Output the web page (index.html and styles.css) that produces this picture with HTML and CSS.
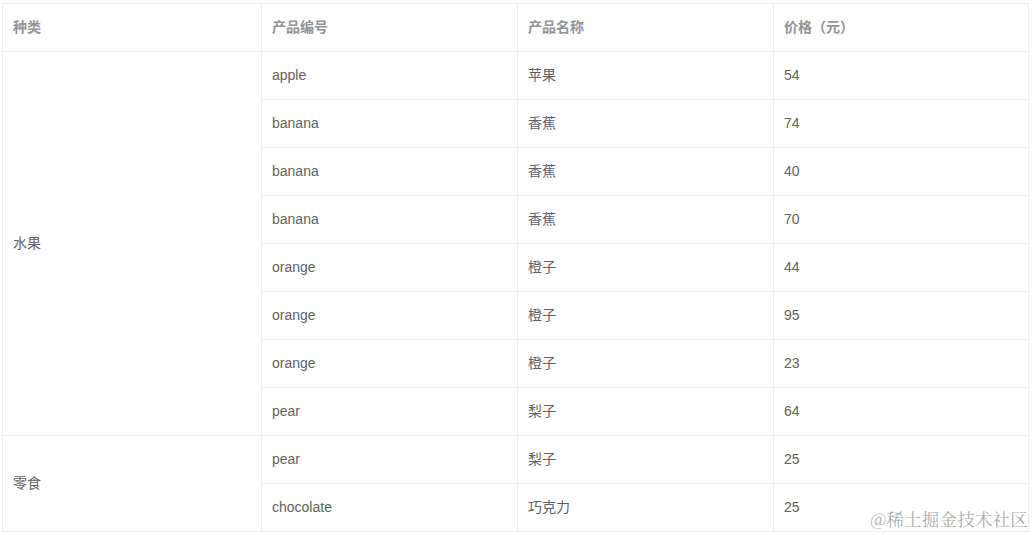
FILE: index.html
```html
<!DOCTYPE html>
<html lang="zh-CN">
<head>
<meta charset="utf-8">
<title>表格</title>
<link rel="stylesheet" href="styles.css">
</head>
<body>
<div class="table">
  <div class="th">种类</div>
  <div class="th">产品编号</div>
  <div class="th">产品名称</div>
  <div class="th">价格（元）</div>

  <div class="td span8">水果</div>
  <div class="td">apple</div><div class="td">苹果</div><div class="td">54</div>
  <div class="td">banana</div><div class="td">香蕉</div><div class="td">74</div>
  <div class="td">banana</div><div class="td">香蕉</div><div class="td">40</div>
  <div class="td">banana</div><div class="td">香蕉</div><div class="td">70</div>
  <div class="td">orange</div><div class="td">橙子</div><div class="td">44</div>
  <div class="td">orange</div><div class="td">橙子</div><div class="td">95</div>
  <div class="td">orange</div><div class="td">橙子</div><div class="td">23</div>
  <div class="td">pear</div><div class="td">梨子</div><div class="td">64</div>

  <div class="td span2">零食</div>
  <div class="td">pear</div><div class="td">梨子</div><div class="td">25</div>
  <div class="td">chocolate</div><div class="td">巧克力</div><div class="td">25</div>
</div>
<div class="watermark">@稀土掘金技术社区</div>
</body>
</html>
```

FILE: styles.css
```css
html, body {
  margin: 0;
  padding: 0;
  background: #fff;
}
body {
  font-family: "Liberation Sans", Arial, "Noto Sans CJK SC", sans-serif;
  font-size: 14px;
  color: #606266;
}
.table {
  display: grid;
  grid-template-columns: 259px 256px 256px 255px;
  grid-auto-rows: 48px;
  width: 1026px;
  margin: 3px 0 0 2px;
  border-left: 1px solid #ebeef5;
  border-top: 1px solid #ebeef5;
}
.th, .td {
  box-sizing: border-box;
  display: flex;
  align-items: center;
  padding: 0 10px;
  border-right: 1px solid #ebeef5;
  border-bottom: 1px solid #ebeef5;
  line-height: 23px;
}
.th {
  color: #909399;
  font-weight: bold;
}
.span8 { grid-row: span 8; }
.span2 { grid-row: span 2; }
.watermark {
  position: absolute;
  right: 6px;
  top: 506px;
  font-family: "Noto Serif CJK SC", "Noto Sans CJK SC", serif;
  font-size: 17.5px;
  color: rgba(140, 140, 140, 0.75);
  letter-spacing: 0.2px;
}
```
